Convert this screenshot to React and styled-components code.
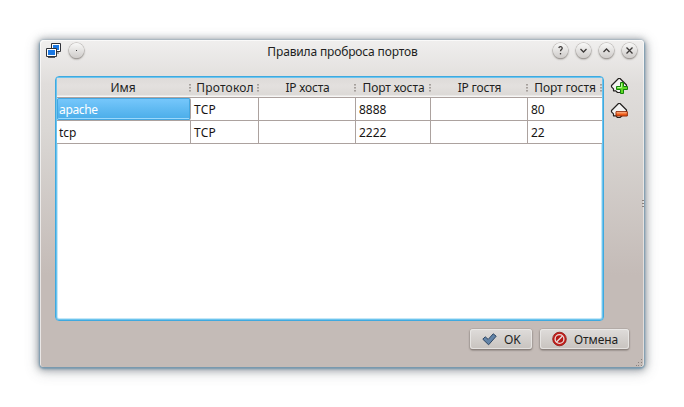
import React from "react";
import styled, { createGlobalStyle } from "styled-components";

const GlobalStyle = createGlobalStyle`
  * { box-sizing: border-box; }
  body { margin: 0; background: #fff; overflow: hidden; }
`;

const Desktop = styled.main`
  width: 684px;
  height: 407px;
  padding: 40px;
  background: #fff;
  font: 12px/16px "Noto Sans", "Open Sans", sans-serif;
  color: #221f1e;
`;

const Dialog = styled.section`
  position: relative;
  width: 604px;
  height: 327px;
  border-radius: 4px;
  background: linear-gradient(#f0efee 0, #e0dddb 44px, #dad7d4 90px, #c4bbb7 235px, #c4bbb7 100%);
  box-shadow: inset 1px 1px 0 rgba(255, 255, 255, 0.65), inset -1px 0 0 rgba(255, 255, 255, 0.5),
    0 1px 2px 1px #7798ae, 0 1px 7px 2px rgba(60, 72, 84, 0.45), 0 3px 14px 3px rgba(70, 75, 80, 0.2);
`;

const TitleBar = styled.header`
  display: grid;
  grid-template-columns: 46px 1fr 91px;
  align-items: start;
  height: 36px;
  padding: 2px 0 0 6px;
`;

const TitleGroup = styled.div`
  display: flex;
  align-items: flex-start;
  gap: ${(p) => p.$gap}px;
`;

const Title = styled.h1`
  margin: 1px 0 0;
  padding-left: 40px;
  text-align: center;
  font-size: 12px;
  font-weight: 400;
  line-height: 17px;
  letter-spacing: ${(p) => p.$tracking}px;
`;

const RoundButton = styled.button`
  display: flex;
  flex: none;
  width: 15px;
  height: 15px;
  margin-top: 1px;
  padding: 0;
  border: 0;
  border-radius: 50%;
  align-items: center;
  justify-content: center;
  background: linear-gradient(#f8f8f7, #cfccca);
  box-shadow: 0 0 0 0.5px #b5b1ae, 0 1px 2px 0 rgba(70, 65, 60, 0.8);
`;

const Content = styled.div`
  display: flex;
  gap: 6px;
  padding-left: 15px;
`;

const TableFrame = styled.div`
  width: 549px;
  height: 245px;
  overflow: hidden;
  border: 1px solid #3fa9df;
  border-radius: 4px;
  background: #fff;
  box-shadow: inset 0 0 0 1px #6cc4ee, inset 0 0 0 2px #c4e7f7;
  padding: 1px;
`;

const Row = styled.div`
  display: grid;
  grid-template-columns: 134px 68px 97px 75px 97px 74px;
  height: ${(p) => (p.$header ? 20 : 23)}px;
  background: ${(p) => (p.$header ? "linear-gradient(#dedbd9, #e3e0de 8px, #dcd9d6 17px, #f7f6f5 18px)" : "#fff")};
  border-bottom: 1px solid #aca29f;
`;

const HeadCell = styled.div`
  display: flex;
  align-items: center;
  justify-content: space-between;
  padding: 0 0 1px ${(p) => (p.$first ? 0 : 2)}px;
`;

const HeadLabel = styled.span`
  flex: 1;
  text-align: center;
  white-space: nowrap;
  line-height: 18px;
  padding-top: 1px;
  letter-spacing: ${(p) => p.$tracking}px;
`;

const Grip = styled.span`
  flex: none;
  width: 2px;
  height: 8px;
  background: repeating-linear-gradient(#9a9490 0 1px, #b9b4b1 1px 2px, transparent 2px 3px);
  opacity: 0.85;
`;

const Cell = styled.div`
  padding: 3px 0 0 ${(p) => (p.$first ? 2 : 3)}px;
  line-height: 18px;
  letter-spacing: ${(p) => p.$tracking || 0}px;
  border-right: 1px solid #aca29f;
  color: ${(p) => (p.$selected ? "#fff" : "#181514")};
  background: ${(p) => (p.$selected ? "linear-gradient(#78c8fc, #48ace8)" : "transparent")};
  border-radius: ${(p) => (p.$selected ? 2 : 0)}px;
  box-shadow: ${(p) => (p.$selected ? "inset 0 0 0 1px #43a7e1, inset 0 -2px 0 #9ad8fc" : "none")};

  &:last-child { border-right-color: #fff; }
`;

const Tools = styled.div`
  display: flex;
  flex-direction: column;
  gap: 7px;
  padding-top: 1px;
`;

const ToolButton = styled.button`
  width: 18px;
  height: 18px;
  padding: 0;
  border: 0;
  background: none;
`;

const Footer = styled.footer`
  display: flex;
  justify-content: flex-end;
  gap: 8px;
  padding: 8px 15px 0 0;
`;

const ActionButton = styled.button`
  display: flex;
  align-items: center;
  gap: ${(p) => p.$gap}px;
  width: ${(p) => p.$width}px;
  height: 20px;
  padding: 1px 0 0 12px;
  border: 0;
  border-radius: 3px;
  background: linear-gradient(#dfdcda, #c8c3bf);
  box-shadow: inset 0 0 0 1px rgba(240, 238, 236, 0.7), 0 0 0 0.5px #aaa29e, 0 1px 2px 0 rgba(60, 50, 45, 0.85);
  color: #221f1e;
  font: inherit;
  letter-spacing: ${(p) => p.$tracking}px;
`;

const Icon = styled.svg`
  display: block;
  flex: none;
  overflow: visible;
`;

const SideGrip = styled.span`
  position: absolute;
  right: 0;
  top: 160px;
  width: 2px;
  height: 7px;
  background: repeating-linear-gradient(#8b827e 0 1px, transparent 1px 3px);
`;

const ResizeGrip = styled(Icon)`
  position: absolute;
  right: 1px;
  bottom: 1px;
`;

const columns = [
  ["Имя", 0],
  ["Протокол", 0.2],
  ["IP хоста", -0.2],
  ["Порт хоста", -0.1],
  ["IP гостя", -0.2],
  ["Порт гостя", -0.1],
];

const rules = [
  ["apache", "TCP", "", "8888", "", "80"],
  ["tcp", "TCP", "", "2222", "", "22"],
];

const tracking = { apache: -0.35, TCP: 0.3, tcp: 0, "80": 0, "22": 0 };

const glyphs = {
  dot: <rect x="4" y="4" width="1" height="1" fill="#333" stroke="none" />,
  help: <><path d="M2.8 2C3.2.2 6.3.3 6.2 2.2C6.1 3.6 4.5 3.6 4.5 5.3" /><path d="M4.5 7v1.4" /></>,
  down: <path d="M1.5 3 4.5 6l3-3" />,
  up: <path d="M1.5 6 4.5 3l3 3" />,
  close: <path d="m1.5 1.5 6 6m0-6-6 6" />,
};

function TitleControl({ kind }) {
  return (
    <RoundButton aria-label={kind}>
      <Icon width="9" height="9" viewBox="0 0 9 9" fill="none" stroke="#3c3938" strokeWidth="1.3">
        {glyphs[kind]}
      </Icon>
    </RoundButton>
  );
}

function Monitors() {
  return (
    <Icon width="16" height="16" viewBox="0 0 16 16">
      <path d="M7 10.5h6v1H7z" fill="#55585e" />
      <path d="M5.5 1.5h9v8h-9z" fill="#fff" stroke="#303238" />
      <path d="M7 3h6v5H7z" fill="#1b78e2" />
      <path d="M2 14h7v2H2z" fill="#55585e" />
      <path d="M.5 6.5h10v8H.5z" fill="#fff" stroke="#303238" />
      <path d="M2 8h7v5H2z" fill="#1b78e2" />
    </Icon>
  );
}

function RuleIcon({ add }) {
  return (
    <Icon width="18" height="18" viewBox="0 0 18 18">
      <path d="M1.5 8.5 8.5 1.5h1.5L16.5 8v1.5L10 15.5H7.5L5.8 13.8H3.5V11.8L1.5 9.8z" fill="#f3f3f2" stroke="#24211f" strokeWidth="1.2" strokeLinejoin="round" />
      {add ? (
        <>
          <path d="M10.5 5.5h3v4h4v3h-4v4h-3v-4h-4v-3h4z" fill="#5fdc26" stroke="#16800b" />
          <path d="M11.5 6.5v4h-4" fill="none" stroke="#b9f89a" />
        </>
      ) : (
        <>
          <path d="M6 9.7h11.3v4.3H6z" fill="#ef5a17" stroke="#8e2b08" />
          <path d="M6.5 10.2h10.3v1.2H6.5z" fill="#ffb184" />
        </>
      )}
    </Icon>
  );
}

export default function App() {
  return (
    <>
      <GlobalStyle />
      <Desktop>
        <Dialog>
          <TitleBar>
            <TitleGroup $gap={7}>
              <Monitors />
              <TitleControl kind="dot" />
            </TitleGroup>
            <Title $tracking={-0.15}>Правила проброса портов</Title>
            <TitleGroup $gap={8}>
              <TitleControl kind="help" />
              <TitleControl kind="down" />
              <TitleControl kind="up" />
              <TitleControl kind="close" />
            </TitleGroup>
          </TitleBar>
          <Content>
            <TableFrame>
              <Row $header>
                {columns.map(([label, spacing], c) => (
                  <HeadCell key={label} $first={c === 0}>
                    <HeadLabel $tracking={spacing}>{label}</HeadLabel>
                    <Grip />
                  </HeadCell>
                ))}
              </Row>
              {rules.map((rule, r) => (
                <Row key={rule[0]}>
                  {rule.map((value, c) => (
                    <Cell key={c} $tracking={tracking[value]} $first={c === 0} $selected={r === 0 && c === 0}>
                      {value}
                    </Cell>
                  ))}
                </Row>
              ))}
            </TableFrame>
            <Tools>
              <ToolButton aria-label="add"><RuleIcon add /></ToolButton>
              <ToolButton aria-label="remove"><RuleIcon /></ToolButton>
            </Tools>
          </Content>
          <Footer>
            <ActionButton $width={62} $gap={7} $tracking={-0.1}>
              <Icon width="15" height="14" viewBox="0 0 15 14">
                <path d="m.8 6.2 2.4-2.4 3 2.6L11.2.8l3 2.4-7.6 8.6z" fill="#6384a8" stroke="#2e4663" strokeLinejoin="round" />
              </Icon>
              OK
            </ActionButton>
            <ActionButton $width={89} $gap={7} $tracking={-0.1}>
              <Icon width="15" height="15" viewBox="0 0 15 15">
                <circle cx="7.5" cy="7" r="6.8" fill="#c51d1a" stroke="#8d1712" strokeWidth=".8" />
                <circle cx="7.5" cy="7" r="4.4" fill="#b51613" stroke="#e9dedc" strokeWidth="1.3" />
                <path d="m4.5 10 6-6" stroke="#e9dedc" strokeWidth="1.4" />
              </Icon>
              Отмена
            </ActionButton>
          </Footer>
          <SideGrip />
          <ResizeGrip width="7" height="7" viewBox="0 0 7 7" fill="#8b827e">
            <path d="M5 0h1v1H5zM5 3h1v1H5zM5 6h1v1H5zM2 3h1v1H2zM2 6h1v1H2zM0 6h1v1H0z" />
          </ResizeGrip>
        </Dialog>
      </Desktop>
    </>
  );
}
